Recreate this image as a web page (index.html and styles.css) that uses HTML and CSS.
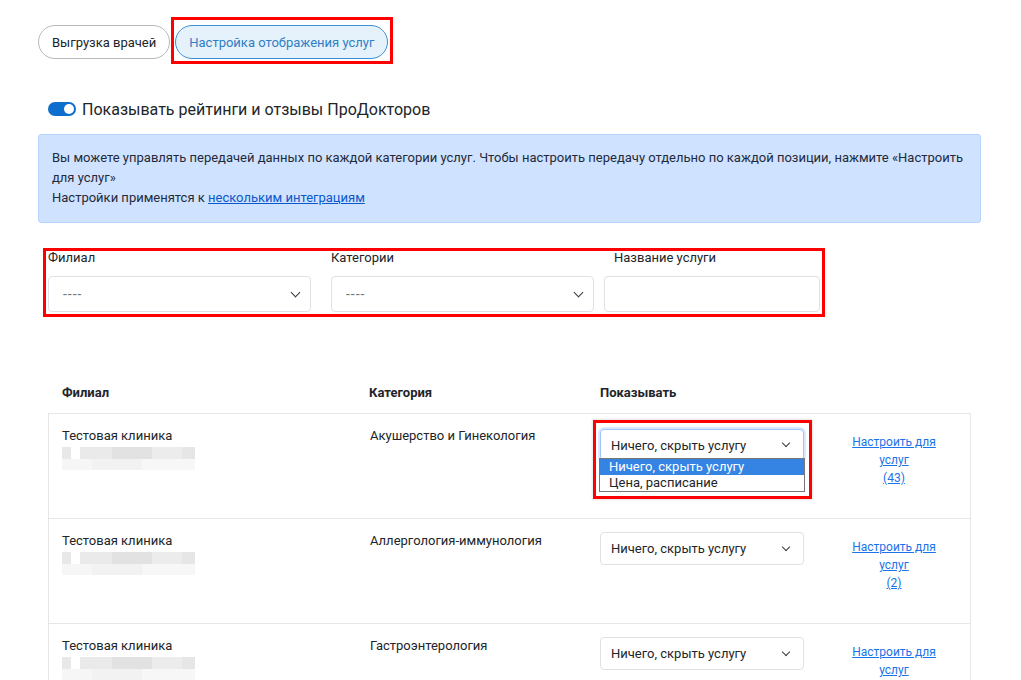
FILE: index.html
```html
<html>
<head>
    <title>Настройка отображения услуг</title>
    <link rel="stylesheet" href="styles.css">
</head>
<body>
    <div class="page">
        <div class="tabs">
            <button class="tab">Выгрузка врачей</button>
            <div class="mark mark-tab">
                <button class="tab active">Настройка отображения услуг</button>
            </div>
        </div>

        <label class="switch-row">
            <span class="switch"><span class="knob"></span></span>
            <span class="switch-text">Показывать рейтинги и отзывы ПроДокторов</span>
        </label>

        <div class="info">
            Вы можете управлять передачей данных по каждой категории услуг. Чтобы настроить передачу отдельно по каждой позиции, нажмите «Настроить для услуг»<br>
            Настройки применятся к <a href="#">нескольким интеграциям</a>
        </div>

        <div class="mark mark-filters">
            <div class="filters">
                <div class="filter">
                    <label>Филиал</label>
                    <div class="select big"><span>----</span><i class="chev"></i></div>
                </div>
                <div class="filter">
                    <label>Категории</label>
                    <div class="select big"><span>----</span><i class="chev"></i></div>
                </div>
                <div class="filter name">
                    <label>Название услуги</label>
                    <div class="input"></div>
                </div>
            </div>
        </div>

        <div class="table">
            <div class="thead">
                <div class="c1">Филиал</div>
                <div class="c2">Категория</div>
                <div class="c3">Показывать</div>
                <div class="c4"></div>
            </div>
            <div class="tbody">
                <div class="row">
                    <div class="c1">Тестовая клиника<div class="blur"></div></div>
                    <div class="c2">Акушерство и Гинекология</div>
                    <div class="c3">
                        <div class="mark mark-select">
                            <div class="select small focus"><span>Ничего, скрыть услугу</span><i class="chev"></i></div>
                            <ul class="options">
                                <li class="selected">Ничего, скрыть услугу</li>
                                <li>Цена, расписание</li>
                            </ul>
                        </div>
                    </div>
                    <div class="c4"><a href="#">Настроить для услуг<br>(43)</a></div>
                </div>
                <div class="row">
                    <div class="c1">Тестовая клиника<div class="blur"></div></div>
                    <div class="c2">Аллергология-иммунология</div>
                    <div class="c3"><div class="select small"><span>Ничего, скрыть услугу</span><i class="chev"></i></div></div>
                    <div class="c4"><a href="#">Настроить для услуг<br>(2)</a></div>
                </div>
                <div class="row">
                    <div class="c1">Тестовая клиника<div class="blur"></div></div>
                    <div class="c2">Гастроэнтерология</div>
                    <div class="c3"><div class="select small"><span>Ничего, скрыть услугу</span><i class="chev"></i></div></div>
                    <div class="c4"><a href="#">Настроить для услуг</a></div>
                </div>
            </div>
        </div>
    </div>
</body>
</html>
```

FILE: styles.css
```css
body {
    margin: 0;
    font-family: Roboto, "Liberation Sans", sans-serif;
    color: #212529;
    background: #fff;
    overflow: hidden;
}
.page {
    padding: 17px 40px 0 38px;
}
.tabs {
    display: flex;
    align-items: flex-start;
    gap: 1px;
}
.tab {
    height: 34px;
    margin-top: 8px;
    padding: 0 13px;
    border: 1px solid #b9b9b9;
    border-radius: 17px;
    background: #fff;
    font-family: inherit;
    font-size: 13px;
    color: #212529;
}
.tab.active {
    margin-top: 0;
    background: #e5f1fb;
    border-color: #3b8fd9;
    color: #2f7fc4;
}
.mark {
    border: 3px solid #f00;
}
.mark-tab {
    padding: 5px 2px 2px 1px;
}
.switch-row {
    display: flex;
    align-items: center;
    margin: 34px 0 0 10px;
    height: 22px;
}
.switch {
    width: 28px;
    height: 14px;
    border-radius: 7px;
    background: #0d6ecd;
    position: relative;
    margin-right: 6px;
}
.knob {
    position: absolute;
    right: 2px;
    top: 2px;
    width: 10px;
    height: 10px;
    border-radius: 50%;
    background: #fff;
}
.switch-text {
    font-size: 16px;
    color: #212529;
}
.info {
    margin-top: 14px;
    background: #cfe2ff;
    border: 1px solid #b6d4fe;
    border-radius: 3px;
    padding: 13px 13px 14px 13px;
    font-size: 13px;
    line-height: 20px;
    color: #1f2a3a;
}
.info a {
    color: #0a58ca;
}
.mark-filters {
    margin: 25px 0 0 5px;
    width: 772px;
    padding: 0 2px 2px 2px;
}
.filters {
    display: flex;
}
.filter label {
    display: block;
    font-size: 13px;
    line-height: 14px;
    margin: 0 0 11px 0;
}
.filter {
    margin-right: 20px;
}
.filter.name {
    margin-left: -10px;
    margin-right: 0;
}
.filter.name label {
    padding-left: 10px;
}
.select {
    display: flex;
    align-items: center;
    justify-content: space-between;
    border: 1px solid #dee2e6;
    border-radius: 4px;
    background: #fff;
    box-sizing: border-box;
}
.select.big {
    width: 263px;
    height: 36px;
    padding: 0 11px 0 14px;
    font-size: 14px;
    letter-spacing: 1px;
    color: #6c757d;
}
.input {
    width: 216px;
    height: 36px;
    border: 1px solid #dee2e6;
    border-radius: 4px;
    box-sizing: border-box;
}
.chev {
    width: 6px;
    height: 6px;
    border-right: 1.5px solid #343a40;
    border-bottom: 1.5px solid #343a40;
    transform: rotate(45deg);
    margin-top: -4px;
}
.table {
    margin: 57px 0 0 10px;
    width: 923px;
}
.thead {
    display: flex;
    font-weight: bold;
    font-size: 13px;
    padding: 11px 0 13px 0;
}
.c1, .c2, .c3, .c4 {
    box-sizing: border-box;
    flex: none;
}
.c1 { width: 307px; padding-left: 14px; }
.c2 { width: 231px; padding-left: 14px; }
.c3 { width: 257px; padding-left: 14px; }
.c4 { width: 100px; text-align: center; }
.tbody {
    border: 1px solid #e6e6e6;
    border-bottom: none;
}
.tbody .c1 { padding-left: 13px; }
.row {
    display: flex;
    height: 105px;
    border-bottom: 1px solid #e6e6e6;
    font-size: 13px;
    padding-top: 13px;
    box-sizing: border-box;
}
.row .c1, .row .c2 {
    line-height: 16px;
    padding-top: 1px;
}
.blur {
    width: 133px;
    height: 23px;
    margin-top: 3px;
    background:
        linear-gradient(90deg, #e8e8e8 0 9px, #fff 9px 18px, #eaeaea 18px 50px, #e2e2e2 50px 90px, #ececec 90px 120px, #e6e6e6 120px 133px) top / 100% 12px no-repeat,
        linear-gradient(90deg, #f6f6f6 0 30px, #f2f2f2 30px 80px, #f7f7f7 80px 133px) bottom / 100% 11px no-repeat;
}
.select.small {
    width: 204px;
    height: 33px;
    padding: 0 14px 0 10px;
    font-size: 13px;
    color: #212529;
}
.select.small .chev {
    width: 5px;
    height: 5px;
}
.row .c3 {
    padding-left: 13px;
}
.mark-select {
    display: inline-block;
    margin: -7px 0 0 -7px;
    padding: 6px 4px 4px 4px;
    box-shadow: 0 0 3px rgba(0,0,0,0.2);
}
.select.focus {
    border-color: #9ec5fe;
    box-shadow: 0 0 0 2px rgba(13,110,253,0.15);
    height: 32px;
}
.options {
    list-style: none;
    margin: -3px 0 0 -1px;
    padding: 0;
    width: 204px;
    border: 1px solid #767676;
    background: #fff;
    font-size: 13px;
}
.options li {
    height: 16px;
    line-height: 16px;
    padding-left: 9px;
}
.options li.selected {
    background: #3584e4;
    color: #fff;
}
.row .c4 {
    font-size: 12px;
    line-height: 18px;
    padding: 6px 0 0 0;
}
.row .c4 a {
    color: #1a73e8;
}
```
